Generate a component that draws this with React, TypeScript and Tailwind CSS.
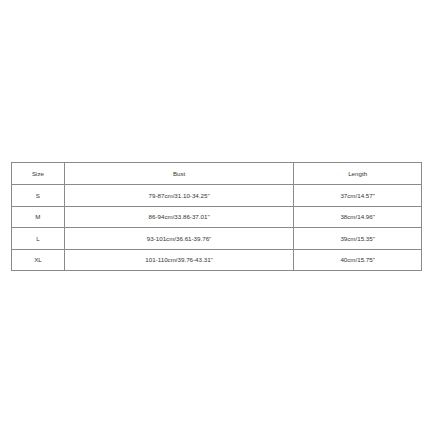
const rows = [
  { size: 'S', bust: '79-87cm/31.10-34.25"', length: '37cm/14.57"' },
  { size: 'M', bust: '86-94cm/33.86-37.01"', length: '38cm/14.96"' },
  { size: 'L', bust: '93-101cm/36.61-39.76"', length: '39cm/15.35"' },
  { size: 'XL', bust: '101-110cm/39.76-43.31"', length: '40cm/15.75"' },
];

export default function App() {
  return (
    <div className="w-[433px] h-[433px] bg-white pt-[162px] pl-[11px] font-['Liberation_Sans',Arial,sans-serif]">
      <table className="border-collapse w-[411px] text-[6.2px] text-[#333] text-center">
        <colgroup>
          <col className="w-[53px]" />
          <col className="w-[230px]" />
          <col className="w-[128px]" />
        </colgroup>
        <tbody>
          <tr className="h-[22px]">
            <td className="border border-[#8a8a8a]">Size</td>
            <td className="border border-[#8a8a8a]">Bust</td>
            <td className="border border-[#8a8a8a]">Length</td>
          </tr>
          {rows.map((r) => (
            <tr key={r.size} className="h-[21.5px]">
              <td className="border border-[#8a8a8a]">{r.size}</td>
              <td className="border border-[#8a8a8a]">{r.bust}</td>
              <td className="border border-[#8a8a8a]">{r.length}</td>
            </tr>
          ))}
        </tbody>
      </table>
    </div>
  );
}
